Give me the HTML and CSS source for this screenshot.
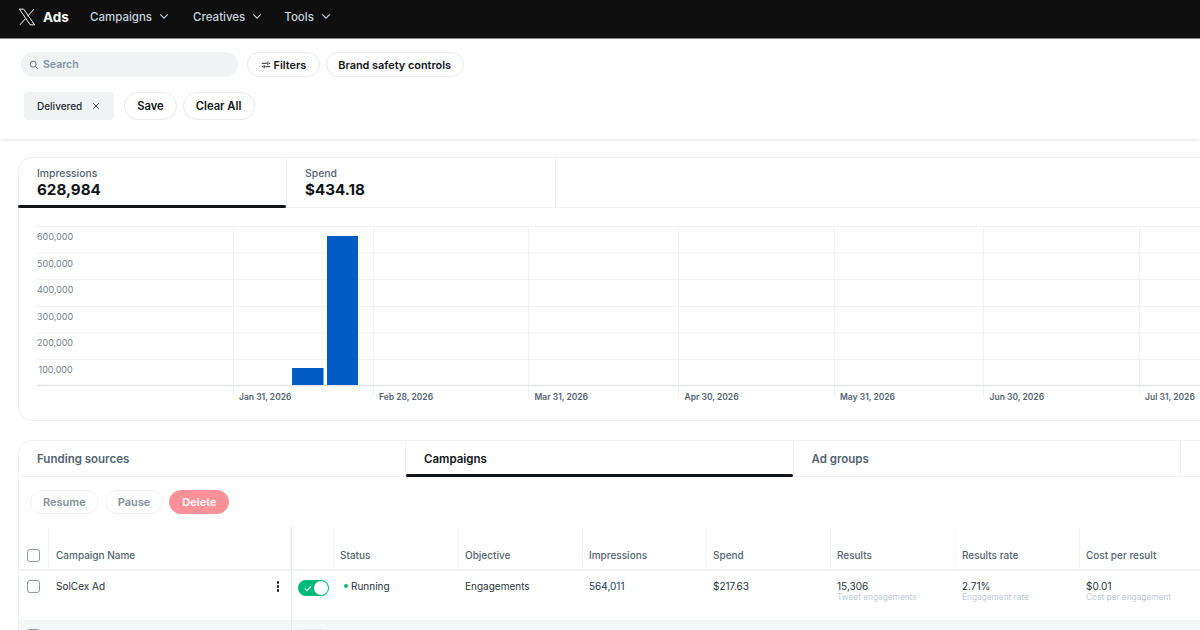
FILE: index.html
```html
<!DOCTYPE html>
<html lang="en">
<head>
<meta charset="utf-8">
<title>X Ads</title>
<link rel="stylesheet" href="styles.css">
</head>
<body>
<header class="nav">
  <svg class="logo" viewBox="0 0 24 24"><path class="logo-x" d="M1.800 1.500h5.800l14.600 21h-5.800zM21.300 1.500l-8.200 9.300M10.500 13.700l-8 8.800"/></svg>
  <span class="brand">Ads</span>
  <nav class="nav-items">
    <span class="nav-item">Campaigns <svg class="chev" viewBox="0 0 12 8"><path d="M1.500 1.500 6 6l4.500-4.500"/></svg></span>
    <span class="nav-item">Creatives <svg class="chev" viewBox="0 0 12 8"><path d="M1.500 1.500 6 6l4.500-4.500"/></svg></span>
    <span class="nav-item">Tools <svg class="chev" viewBox="0 0 12 8"><path d="M1.500 1.500 6 6l4.500-4.500"/></svg></span>
  </nav>
</header>

<section class="filters">
  <div class="filter-row">
    <div class="search">
      <svg class="search-icon" viewBox="0 0 12 12"><circle cx="5" cy="5" r="3.600"/><path d="m7.700 7.700 3 3"/></svg>
      <span>Search</span>
    </div>
    <button class="pill pill-sm"><svg class="sliders" viewBox="0 0 12 12"><path d="M1 4h6M9.500 4H11M8.200 2v4M1 8h1.500M5 8H11M3.800 6v4"/></svg>Filters</button>
    <button class="pill pill-sm">Brand safety controls</button>
  </div>
  <div class="filter-row row-two">
    <div class="chip"><span>Delivered</span><svg class="close" viewBox="0 0 10 10"><path d="m1.500 1.500 7 7M8.500 1.500l-7 7"/></svg></div>
    <div class="save-group">
      <button class="pill pill-lg">Save</button>
      <button class="pill pill-lg">Clear All</button>
    </div>
  </div>
</section>

<section class="card chart-card">
  <div class="metric-tabs">
    <div class="metric metric-on"><div class="metric-label">Impressions</div><div class="metric-value">628,984</div></div>
    <div class="metric"><div class="metric-label">Spend</div><div class="metric-value">$434.18</div></div>
    <div class="metric-rest"></div>
  </div>
  <svg class="chart" width="1182" height="212" viewBox="0 0 1182 212">
    <g class="grid">
      <path d="M19 19.500H1182M19 46H1182M19 72.500H1182M19 99.500H1182M19 126H1182M19 152.500H1182"/>
      <path d="M215.500 19v171M355.500 19v171M510.500 19v171M660.500 19v171M816.500 19v171M965.500 19v171M1121.500 19v171"/>
    </g>
    <path class="axis" d="M19 178.500H1182"/>
    <rect class="bar" x="274" y="161" width="31.500" height="17"/>
    <rect class="bar" x="309" y="29" width="31" height="149"/>
    <g class="y-labels">
      <text x="19" y="33">600,000</text>
      <text x="19" y="59.500">500,000</text>
      <text x="19" y="86">400,000</text>
      <text x="19" y="112.500">300,000</text>
      <text x="19" y="139">200,000</text>
      <text x="20.500" y="166">100,000</text>
    </g>
    <g class="x-labels">
      <text x="221" y="193">Jan 31, 2026</text>
      <text x="361" y="193">Feb 28, 2026</text>
      <text x="516.500" y="193">Mar 31, 2026</text>
      <text x="666.500" y="193">Apr 30, 2026</text>
      <text x="822" y="193">May 31, 2026</text>
      <text x="971.500" y="193">Jun 30, 2026</text>
      <text x="1127" y="193">Jul 31, 2026</text>
    </g>
  </svg>
</section>

<section class="card table-card">
  <div class="level-tabs">
    <div class="level">Funding sources</div>
    <div class="level level-on">Campaigns</div>
    <div class="level">Ad groups</div>
    <div class="level-rest"></div>
  </div>
  <div class="actions">
    <button class="act">Resume</button>
    <button class="act">Pause</button>
    <button class="act act-del">Delete</button>
  </div>
  <div class="table">
    <div class="tr thead">
      <div class="td c-check"><span class="box"></span></div>
      <div class="td c-name">Campaign Name</div>
      <div class="td c-toggle"></div>
      <div class="td">Status</div>
      <div class="td">Objective</div>
      <div class="td">Impressions</div>
      <div class="td">Spend</div>
      <div class="td">Results</div>
      <div class="td">Results rate</div>
      <div class="td c-last">Cost per result</div>
    </div>
    <div class="tr tbody">
      <div class="td c-check"><span class="box"></span></div>
      <div class="td c-name"><span>SolCex Ad</span><span class="kebab"><i></i><i></i><i></i></span></div>
      <div class="td c-toggle"><span class="switch"><svg class="tick" viewBox="0 0 10 8"><path d="m1 4 2.700 2.700L9 1.200"/></svg><span class="knob"></span></span></div>
      <div class="td"><span class="dot"></span>Running</div>
      <div class="td">Engagements</div>
      <div class="td val-blue">564,011</div>
      <div class="td">$217.63</div>
      <div class="td"><div>15,306<div class="sub">Tweet engagements</div></div></div>
      <div class="td"><div>2.71%<div class="sub">Engagement rate</div></div></div>
      <div class="td"><div>$0.01<div class="sub">Cost per engagement</div></div></div>
    </div>
    <div class="tr tnext">
      <div class="td c-check"><span class="box"></span></div>
      <div class="td c-name"></div>
      <div class="td c-toggle"><span class="switch switch-off"></span></div>
    </div>
  </div>
</section>
</body>
</html>
```

FILE: styles.css
```css
* { box-sizing: border-box; }
html, body { margin: 0; height: 630px; overflow: hidden; background: #fff; }
body { font-family: "Inter", "Liberation Sans", sans-serif; color: #0f1419; width: 1200px; }
button { font-family: inherit; cursor: pointer; background: #fff; }

.nav { height: 39px; background: #0f0f0f; border-bottom: 1px solid #8a8a8a; display: flex; align-items: center; padding: 0 0 5px 18px; }
.logo { width: 18px; height: 18px; }
.logo-x { fill: none; stroke: #fff; stroke-width: 1.300; }
.brand { color: #fff; font-weight: 700; font-size: 13.500px; margin-left: 7px; width: 47px; }
.nav-items { display: flex; }
.nav-item { color: #c9d3db; font-size: 11.500px; font-weight: 500; display: flex; align-items: center; gap: 7px; margin-right: 24px; }
.nav-item:nth-child(2) { margin-right: 22px; }
.chev { width: 10px; height: 7px; fill: none; stroke: #c9d3db; stroke-width: 1.400; }

.filters { height: 100px; background: #fff; box-shadow: 0 1px 3px rgba(15, 20, 25, .12); padding: 13px 0 0 21px; display: flex; flex-direction: column; }
.filter-row { display: flex; align-items: center; }
.row-two { margin: 15px 0 0 3px; }
.search { width: 217px; height: 25px; border-radius: 13px; background: #eff3f4; display: flex; align-items: center; padding-left: 8px; gap: 4px; font-size: 10.500px; font-weight: 600; color: #7f93a3; }
.search-icon { width: 10px; height: 10px; fill: none; stroke: #536471; stroke-width: 1.100; }
.pill { border: 1px solid #e6eaec; border-radius: 999px; color: #0f1419; font-weight: 600; display: flex; align-items: center; justify-content: center; padding: 0; }
.pill-sm { height: 25px; font-size: 10.900px; margin-left: 9px; padding: 0 12.500px; }
.pill-sm + .pill-sm { margin-left: 6px; padding: 0 11.500px; }
.sliders { width: 10px; height: 10px; margin-right: 3px; fill: none; stroke: #0f1419; stroke-width: 1.100; }
.chip { width: 90px; height: 28px; background: #eff3f4; border-radius: 4px; display: flex; align-items: center; justify-content: space-between; padding: 0 14px 0 13px; font-size: 10px; font-weight: 500; color: #1f2a33; }
.close { width: 8px; height: 8px; fill: none; stroke: #1f2a33; stroke-width: 1.100; }
.save-group { display: flex; gap: 5.500px; margin-left: 10px; }
.pill-lg { height: 28px; font-size: 11.200px; padding: 0 12.250px; }

.card { width: 1182px; margin-left: 18px; border: 1px solid #eff1f2; border-right: 0; border-radius: 14px 0 0 14px; background: #fff; }
.chart-card { height: 264px; margin-top: 18px; }
.metric-tabs { display: flex; height: 50px; border-bottom: 1px solid #eff1f2; }
.metric { width: 268px; padding: 9px 0 0 18px; border-right: 1px solid #eff1f2; position: relative; }
.metric + .metric { width: 269px; }
.metric-on::after { content: ""; position: absolute; left: -1px; right: 0; bottom: -1px; height: 3px; border-radius: 2px; background: #0f1419; }
.metric-label { font-size: 10.400px; color: #536471; line-height: 13px; font-weight: 500; }
.metric-value { font-size: 15.200px; font-weight: 700; line-height: 18px; margin-top: 1px; }
.metric-rest { flex: 1; }
.chart { display: block; margin: -1px 0 0 -1px; }
.grid path { fill: none; stroke: #eff3f4; stroke-width: 1; }
.axis { fill: none; stroke: #e2e6e8; stroke-width: 1.500; }
.bar { fill: #005cc4; }
.y-labels text { font-size: 9px; fill: #74808a; }
.x-labels text { font-size: 8.500px; fill: #536471; font-weight: 600; }

.table-card { height: 190px; margin-top: 19px; border-bottom: 0; border-radius: 14px 0 0 0; overflow: hidden; }
.level-tabs { display: flex; height: 36px; border-bottom: 1px solid #eff1f2; }
.level { width: 387.500px; padding: 1px 0 0 18px; font-size: 11.500px; font-weight: 600; color: #536471; display: flex; align-items: center; border-right: 1px solid #eff1f2; position: relative; }
.level:first-child { width: 387px; }
.level-on { color: #0f1419; }
.level-on::after { content: ""; position: absolute; left: 0; right: 0; bottom: -1px; height: 3px; border-radius: 2px; background: #0f1419; }
.level-rest { flex: 1; }
.actions { display: flex; gap: 6px; padding: 13px 0 0 11px; }
.act { height: 24px; padding: 0 12px; border: 1px solid #eff1f2; border-radius: 999px; font-size: 11px; font-weight: 600; color: #829099; }
.act-del { background: #fd9197; border-color: #fd9197; color: #fff; }

.table { margin: 13px 0 0 -1px; }
.tr { display: grid; grid-template-columns: 31px 242px 43px 125px 124px 124px 124px 125px 124px 120px; }
.td { display: flex; align-items: center; padding-left: 6px; font-size: 10px; }
.td.c-name { padding-left: 7px; }
.thead { height: 44px; border-bottom: 2px solid #eff3f4; color: #536471; font-weight: 500; }
.thead .td { border-right: 1px solid #f2f4f5; padding-top: 14px; }
.thead .td.c-last { border-right: 0; }
.thead .c-check, .tbody .c-check, .tnext .c-check { padding: 14px 0 0 9px; }
.thead .c-toggle { border-left: 1px solid #e3e8ea; border-right: 1px solid #f2f4f5; }
.box { width: 13px; height: 13px; border: 1px solid #8d989f; border-radius: 3px; display: block; background: #fff; }
.tbody { height: 49px; color: #27323a; font-weight: 400; }
.tbody .td { align-items: flex-start; padding-top: 9px; line-height: 13px; }
.tbody .c-check { padding: 9px 0 0 9px; }
.tbody .c-name { justify-content: space-between; padding-right: 12px; }
.tbody .c-toggle, .tnext .c-toggle { border-left: 1px solid #e3e8ea; }
.kebab { display: flex; flex-direction: column; gap: 1.500px; padding-top: 1px; }
.kebab i { width: 2.500px; height: 2.500px; border-radius: 50%; background: #0f1419; display: block; }
.switch { width: 31px; height: 16px; border-radius: 8px; background: #00ba7c; display: flex; align-items: center; justify-content: space-between; padding: 0 1px 0 6px; flex: none; }
.tick { width: 8px; height: 7px; fill: none; stroke: #fff; stroke-width: 1.300; }
.knob { width: 14px; height: 14px; border-radius: 50%; background: #fff; }
.dot { width: 4px; height: 4px; border-radius: 50%; background: #00ba7c; margin: 4px 3px 0 4px; flex: none; }
.val-blue { color: #1d3a57; }
.sub { font-size: 8.300px; color: #c0ccd4; line-height: 11px; margin-top: -1px; }
.tnext { height: 10px; background: #f5f8f8; overflow: hidden; }
.tnext .td { padding-top: 9px; align-items: flex-start; }
.tnext .c-check { padding-top: 9px; }
.switch-off { background: #e3e8ea; }
```
